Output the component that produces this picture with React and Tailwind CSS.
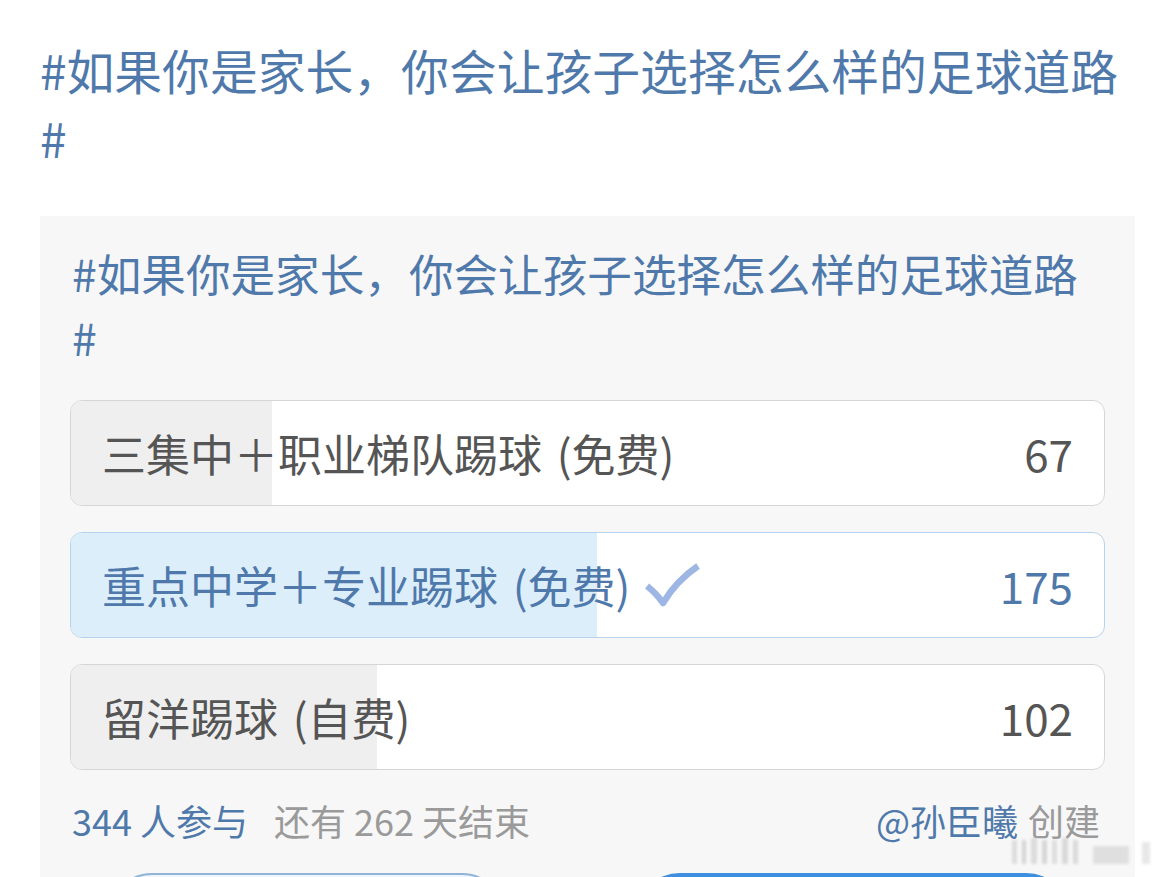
import React from "react";

const options = [
  { label: "三集中＋职业梯队踢球\u2004(免费)", count: 67, selected: false },
  { label: "重点中学＋专业踢球\u2004(免费)", count: 175, selected: true },
  { label: "留洋踢球\u2004(自费)", count: 102, selected: false },
];
const total = 344;

function Check() {
  return (
    <svg width="56" height="44" viewBox="0 0 56 44" className="ml-[14px] shrink-0">
      <path d="M3 23 Q12 30 19 40 Q32 18 54 3" fill="none" stroke="#9db6e4" strokeWidth="6.5" strokeLinejoin="round" />
    </svg>
  );
}

export default function App() {
  return (
    <div
      className="w-[1176px] h-[877px] overflow-hidden bg-white relative"
      style={{ fontFamily: '"Noto Sans CJK SC", "Noto Sans", sans-serif' }}
    >
      <div className="pt-[36px] pl-[40px] pr-[40px]">
        <div className="text-[47.8px] leading-[68px] text-[#4f79ab] w-[1096px]">
          #如果你是家长，你会让孩子选择怎么样的足球道路#
        </div>
        <div className="mt-[44px] w-[1095px] bg-[#f7f7f7] px-[30px] pt-[25px] h-[700px]">
          <div className="text-[44.6px] leading-[64px] text-[#4f79ab] pl-[2px] w-[1030px]">
            #如果你是家长，你会让孩子选择怎么样的足球道路#
          </div>
          <div className="mt-[31px] flex flex-col gap-[26px]">
            {options.map((o) => (
              <div
                key={o.label}
                className={
                  "relative h-[106px] rounded-[12px] border overflow-hidden bg-white " +
                  (o.selected ? "border-[#b5d3ec]" : "border-[#d6d6d6]")
                }
              >
                <div
                  className={
                    "absolute left-0 top-0 bottom-0 " +
                    (o.selected ? "bg-[#ddeefb]" : "bg-[#efefef]")
                  }
                  style={{ width: `${(o.count / total) * 100}%` }}
                />
                <div className="relative h-full flex items-center justify-between pl-[31px] pr-[31px]">
                  <div className="flex items-center">
                    <span
                      className={
                        "text-[44px] leading-none whitespace-pre " +
                        (o.selected ? "text-[#4f79ab]" : "text-[#555555]")
                      }
                    >
                      {o.label}
                    </span>
                    {o.selected && <Check />}
                  </div>
                  <span
                    className={
                      "text-[44px] leading-none " +
                      (o.selected ? "text-[#4f79ab]" : "text-[#555555]")
                    }
                  >
                    {o.count}
                  </span>
                </div>
              </div>
            ))}
          </div>
          <div className="mt-[25px] h-[50px] flex items-center justify-between text-[36px] leading-[50px] pl-[2px] pr-[5px]">
            <div className="flex items-center">
              <span className="text-[#4f79ab]">344 人参与</span>
              <span className="ml-[26px] text-[#9a9a9a]">还有 262 天结束</span>
            </div>
            <div className="flex items-center">
              <span className="text-[#4f79ab]">@孙臣曦</span>
              <span className="ml-[10px] text-[#9a9a9a]">创建</span>
            </div>
          </div>
          <div className="mt-[28px] flex justify-between pl-[38px] pr-[35px]">
            <div className="w-[398px] h-[88px] rounded-full border-2 border-[#90b3d6] bg-[#eef5fc]" />
            <div className="w-[434px] h-[88px] rounded-full bg-[#3f8fe0]" />
          </div>
        </div>
      </div>
      <div className="absolute left-[1012px] top-[838px] flex items-end gap-[5px] opacity-70 blur-[1.5px]">
        <div className="w-[5px] h-[24px] bg-[#d0d0d0]" />
        <div className="w-[4px] h-[24px] bg-[#c4c4c4]" />
        <div className="w-[6px] h-[26px] bg-[#cfcfcf]" />
        <div className="w-[5px] h-[24px] bg-[#c8c8c8]" />
        <div className="w-[5px] h-[24px] bg-[#d2d2d2]" />
        <div className="w-[6px] h-[26px] bg-[#cbcbcb]" />
        <div className="w-[5px] h-[24px] bg-[#cdcdcd]" />
        <div className="w-[36px] h-[18px] bg-[#d6d6d6] ml-[10px]" />
        <div className="w-[8px] h-[22px] bg-[#dedede] ml-[8px]" />
      </div>
    </div>
  );
}
